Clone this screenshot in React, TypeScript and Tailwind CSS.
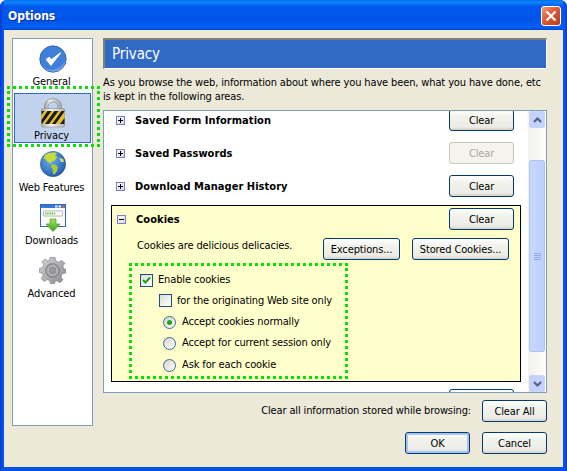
import React from "react";

const F = "font-['DejaVu_Sans_Condensed','DejaVu_Sans',sans-serif]";

function Btn({ w, label, disabled, def }: { w: string; label: string; disabled?: boolean; def?: boolean }) {
  return (
    <div
      className={`${w} h-[22px] shrink-0 rounded-[3px] border flex items-center justify-center text-[11px] leading-none whitespace-nowrap ${
        disabled
          ? "border-[#C9C7BA] bg-[#F4F3EE] text-[#ACA899]"
          : "border-[#003C74] bg-[linear-gradient(180deg,#FFFFFF_0%,#F3F3EE_30%,#ECEBE5_85%,#D6D0C5_100%)] text-black"
      } ${def ? "shadow-[inset_0_0_0_2px_#A9C4EE]" : ""}`}
    >
      {label}
    </div>
  );
}

function Tree({ minus }: { minus?: boolean }) {
  return (
    <div className="w-[9px] h-[9px] shrink-0 border border-[#7B7FC0] bg-[linear-gradient(135deg,#FFFFFF,#D8D8E4)] relative">
      <div className="absolute left-[1px] top-[3px] w-[5px] h-[1px] bg-black" />
      {!minus && <div className="absolute left-[3px] top-[1px] w-[1px] h-[5px] bg-black" />}
    </div>
  );
}

function Row({ title, disabled }: { title: string; disabled?: boolean }) {
  return (
    <div className="flex items-center h-[22px] pl-[12px] pr-[14px]">
      <Tree />
      <div className="ml-[10px] pt-[3px] font-bold text-[11px] tracking-[0.05px] flex-1 text-black">{title}</div>
      <Btn w="w-[65px]" label="Clear" disabled={disabled} />
    </div>
  );
}

function Check({ on }: { on?: boolean }) {
  return (
    <div className="w-[13px] h-[13px] shrink-0 border border-[#1C5180] bg-[linear-gradient(135deg,#DCDCD7,#FFFFFF)]">
      {on && (
        <svg viewBox="0 0 11 11" className="w-[11px] h-[11px]">
          <path d="M2 5 L4.5 7.5 L9 2.5" fill="none" stroke="#21A121" strokeWidth="2" />
        </svg>
      )}
    </div>
  );
}

function Radio({ on }: { on?: boolean }) {
  return (
    <div className="w-[13px] h-[13px] shrink-0 rounded-full border border-[#3B6A96] bg-[linear-gradient(135deg,#D4D4CE,#FFFFFF)] flex items-center justify-center">
      {on && <div className="w-[5px] h-[5px] rounded-full bg-[#21A121]" />}
    </div>
  );
}

const IconGeneral = () => (
  <svg viewBox="0 0 28 28" className="w-[28px] h-[28px]">
    <defs>
      <radialGradient id="g1" cx="0.45" cy="0.35" r="0.75">
        <stop offset="0" stopColor="#3E7FDB" />
        <stop offset="0.7" stopColor="#3F80DC" />
        <stop offset="0.88" stopColor="#9CC3F3" />
        <stop offset="1" stopColor="#3A6FBE" />
      </radialGradient>
    </defs>
    <circle cx="14" cy="14" r="13.2" fill="url(#g1)" stroke="#2E5A9C" strokeWidth="0.8" />
    <path d="M7.5 14.5 L12 20 L21.5 8 L12.3 15 L10 12.5 Z" fill="#fff" stroke="#fff" strokeWidth="1.2" strokeLinejoin="round" />
  </svg>
);

const IconLock = () => (
  <svg viewBox="0 0 24 30" className="w-[24px] h-[30px]">
    <defs>
      <linearGradient id="l1" x1="0" x2="1">
        <stop offset="0" stopColor="#9A9A9A" />
        <stop offset="0.3" stopColor="#F0F0F0" />
        <stop offset="1" stopColor="#A4A4A4" />
      </linearGradient>
      <linearGradient id="l2" x1="0" x2="1">
        <stop offset="0" stopColor="#A8A8A8" />
        <stop offset="0.4" stopColor="#F6F6F6" />
        <stop offset="1" stopColor="#B4B4B4" />
      </linearGradient>
    </defs>
    <path d="M3.5 12 V9 C3.5 3.5 7 0.7 12 0.7 C17 0.7 20.5 3.5 20.5 9 V12 H17 V9 C17 5.8 15 4 12 4 C9 4 7 5.8 7 9 V12 Z" fill="url(#l1)" stroke="#808080" strokeWidth="0.6" />
    <rect x="0.4" y="10.5" width="23.2" height="18.5" rx="1.5" fill="url(#l2)" stroke="#8A8A8A" strokeWidth="0.6" />
    <rect x="0.5" y="13" width="23" height="13" fill="#E2BE3A" />
    <path d="M0.5 13h3l-3 4zM6.5 13h4l-9.5 13h-0.5v-4zM13.5 13h4L8 26H4zM20.5 13h3v0.5L14.5 26h-3.5zM23.5 20v6h-4.5z" fill="#1C1C1C" />
  </svg>
);

const IconGlobe = () => (
  <svg viewBox="0 0 26 26" className="w-[26px] h-[26px]">
    <defs>
      <radialGradient id="w1" cx="0.4" cy="0.35" r="0.8">
        <stop offset="0" stopColor="#6FB0EE" />
        <stop offset="0.7" stopColor="#2D6CC0" />
        <stop offset="1" stopColor="#173C80" />
      </radialGradient>
    </defs>
    <circle cx="13" cy="13" r="12.6" fill="url(#w1)" stroke="#2A4C86" strokeWidth="0.6" />
    <path d="M5 4 C8 1.5 13 1 17 2 L15 5 L17.5 6 L14 10 L11 11 L10.5 13 L8 11 L5 8 L3.5 8 Z" fill="#C4DC3C" />
    <path d="M11.5 13.5 L15 13.5 L18 16 L17 20 L14.5 23.5 L13 23 L12.5 18 L11 16 Z" fill="#A8CE30" />
    <path d="M19 7 L23 8 L24 11 L21 11 Z" fill="#D2E254" />
  </svg>
);

const IconDownload = () => (
  <svg viewBox="0 0 26 28" className="w-[26px] h-[28px]">
    <defs>
      <linearGradient id="d1" x1="0" x2="0" y1="0" y2="1">
        <stop offset="0" stopColor="#A5E25A" />
        <stop offset="1" stopColor="#3FA11E" />
      </linearGradient>
    </defs>
    <rect x="0.5" y="0.5" width="25" height="22" fill="#FBFBF6" stroke="#2D66C4" />
    <rect x="1" y="1" width="24" height="3" fill="#3C78D8" />
    <rect x="15" y="1.5" width="2.5" height="2" fill="#E8EEF8" />
    <rect x="18.5" y="1.5" width="2.5" height="2" fill="#E8EEF8" />
    <rect x="22" y="1.5" width="2.5" height="2" fill="#E2623F" />
    <rect x="3.5" y="7" width="19" height="5" rx="1" fill="#FFF" stroke="#9A9A9A" strokeWidth="0.7" />
    <path d="M5 8.5h1.4v2H5zM7.2 8.5h1.4v2H7.2zM9.4 8.5h1.4v2H9.4zM11.6 8.5h1.4v2h-1.4zM13.8 8.5h1.4v2h-1.4z" fill="#5BBE3C" />
    <path d="M10 15 H16 V20 H20 L13 27.5 L6 20 H10 Z" fill="url(#d1)" stroke="#3B8A1E" strokeWidth="0.6" />
  </svg>
);

const IconGear = () => (
  <svg viewBox="0 0 27 27" className="w-[27px] h-[27px]">
    <defs>
      <linearGradient id="a1" x1="0" x2="1" y1="0" y2="1">
        <stop offset="0" stopColor="#D4D4D8" />
        <stop offset="1" stopColor="#8A8A90" />
      </linearGradient>
      <radialGradient id="a2">
        <stop offset="0" stopColor="#F4F4F4" />
        <stop offset="0.6" stopColor="#BCBCC0" />
        <stop offset="1" stopColor="#8A8A8E" />
      </radialGradient>
    </defs>
    <path
      d="M11 0.5 H16 L16.8 4 L19.8 5.2 L22.8 3.3 L25.7 6.2 L23.8 9.2 L25 12 L26.5 12 V16 L23.2 16.8 L22 19.8 L23.9 22.8 L21 25.7 L18 23.8 L16 24.6 L15.5 26.5 H11.5 L10.7 23.6 L8 22.6 L5 24.5 L2.2 21.6 L4.1 18.6 L3 16 L0.5 15.5 V11.5 L3.6 10.6 L4.8 7.8 L3 4.8 L5.8 2 L8.8 3.9 L10.5 3.2 Z"
      fill="url(#a1)"
      stroke="#78787C"
      strokeWidth="0.6"
    />
    <circle cx="13.5" cy="13.5" r="7" fill="url(#a2)" stroke="#77777B" strokeWidth="0.6" />
    <circle cx="13.5" cy="13.5" r="3.4" fill="#9A9A9E" stroke="#6A6A6E" strokeWidth="0.5" />
  </svg>
);

function Nav({ icon, label, sel }: { icon: React.ReactNode; label: string; sel?: boolean }) {
  return (
    <div className={`h-[50px] mx-[1px] flex flex-col items-center border ${sel ? "border-[#316AC5] bg-[#C1D2EE]" : "border-transparent"}`}>
      <div className="h-[33px] pt-[4px] flex items-start justify-center">{icon}</div>
      <div className={`text-[11px] leading-[14px] text-black whitespace-nowrap -ml-[2px] ${sel ? "mt-[2px]" : "mt-[1px]"}`}>{label}</div>
    </div>
  );
}

function Scrollbar() {
  return (
    <div className="w-[18px] shrink-0 flex flex-col bg-[linear-gradient(90deg,#F3F1EC,#FEFEFB)]">
      <div className="h-[17px] mx-[1px] rounded-[2px] border border-[#C9D6F5] bg-[#C3D3FD] flex items-center justify-center">
        <svg viewBox="0 0 9 6" className="w-[9px] h-[6px]"><path d="M1 5 L4.5 1.5 L8 5" fill="none" stroke="#4D6185" strokeWidth="2" /></svg>
      </div>
      <div className="h-[32px]" />
      <div className="h-[192px] mx-[1px] rounded-[2px] border border-[#AEC3F5] bg-[linear-gradient(90deg,#C9D8FC,#BCCFFB)] flex flex-col items-center justify-center gap-[1px]">
        <div className="w-[7px] h-[1px] bg-[#8FAAE8]" />
        <div className="w-[7px] h-[1px] bg-[#8FAAE8]" />
        <div className="w-[7px] h-[1px] bg-[#8FAAE8]" />
        <div className="w-[7px] h-[1px] bg-[#8FAAE8]" />
      </div>
      <div className="flex-1" />
      <div className="h-[17px] mx-[1px] rounded-[2px] border border-[#C9D6F5] bg-[#C3D3FD] flex items-center justify-center">
        <svg viewBox="0 0 9 6" className="w-[9px] h-[6px]"><path d="M1 1 L4.5 4.5 L8 1" fill="none" stroke="#4D6185" strokeWidth="2" /></svg>
      </div>
    </div>
  );
}

function Opt({ pl, ctl, label, h, gap }: { pl: string; ctl: React.ReactNode; label: string; h: string; gap: string }) {
  return (
    <div className={`flex items-center ${pl} ${h}`}>
      {ctl}
      <div className={`${gap} text-[11px] text-black whitespace-nowrap`}>{label}</div>
    </div>
  );
}

export default function App() {
  return (
    <div className={`w-[567px] h-[471px] relative overflow-hidden ${F} tracking-[-0.13px] bg-[#0053E4] rounded-t-[7px]`}>
      <div className="h-[30px] flex items-center justify-between pl-[8px] pr-[6px] pt-[2px] bg-[linear-gradient(180deg,#0A6AF0_0%,#0A85FB_8%,#0058EE_22%,#0055E8_70%,#0062F5_90%,#0046CF_100%)]">
        <div className="text-white font-bold text-[12px] leading-none tracking-normal [text-shadow:1px_1px_0_#0F2F9A]">Options</div>
        <div className="w-[20px] h-[20px] rounded-[3px] border border-white bg-[linear-gradient(135deg,#EE9A7C,#DD5A33_45%,#C23A15)] flex items-center justify-center">
          <svg viewBox="0 0 12 12" className="w-[12px] h-[12px]"><path d="M1.5 1.5 L10.5 10.5 M10.5 1.5 L1.5 10.5" stroke="#fff" strokeWidth="2.2" /></svg>
        </div>
      </div>
      <div className="absolute left-0 top-0 bottom-0 w-[4px] bg-[linear-gradient(90deg,#0831D9,#0055E8_50%,#0B55E3)]" />
      <div className="absolute right-0 top-0 bottom-0 w-[4px] bg-[linear-gradient(90deg,#0B55E3,#0055E8_50%,#0831D9)]" />
      <div className="mx-[4px] h-[437px] bg-[#ECE9D8] flex pt-[8px] pl-[8px] pr-[16px] pb-[14px] gap-[10px]">
        <div className="w-[81px] shrink-0 h-[388px] border border-[#7F9DB9] bg-white pt-[1px] flex flex-col gap-[3px]">
          <Nav icon={<IconGeneral />} label="General" />
          <Nav icon={<IconLock />} label="Privacy" sel />
          <Nav icon={<IconGlobe />} label="Web Features" />
          <Nav icon={<IconDownload />} label="Downloads" />
          <Nav icon={<IconGear />} label="Advanced" />
        </div>
        <div className="flex-1 min-w-0 flex flex-col">
          <div className="h-[31px] shrink-0 bg-[#316AC5] border-t-2 border-l-2 border-t-[#808078] border-l-[#808078] border-b border-r border-b-white border-r-white flex items-center pl-[7px] pt-[1px] text-white text-[15px] leading-none">
            Privacy
          </div>
          <div className="mt-[7px] text-[11px] leading-[14px] h-[34px] shrink-0 text-black whitespace-nowrap overflow-hidden">
            As you browse the web, information about where you have been, what you have done, etc
            <br />
            is kept in the following areas.
          </div>
          <div className="h-[283px] shrink-0 border border-[#7F9DB9] bg-white flex overflow-hidden">
            <div className="flex-1 min-w-0 overflow-hidden flex flex-col gap-[11px] -mt-[2px]">
              <Row title="Saved Form Information" />
              <Row title="Saved Passwords" disabled />
              <Row title="Download Manager History" />
              <div className="-mt-[3px] mx-[7px] h-[177px] shrink-0 border border-black bg-[#FFFFCC] flex flex-col">
                <div className="flex items-center h-[22px] mt-[2px] pl-[5px] pr-[6px]">
                  <Tree minus />
                  <div className="ml-[10px] pt-[3px] font-bold text-[11px] tracking-[0.05px] flex-1 text-black">Cookies</div>
                  <Btn w="w-[65px]" label="Clear" />
                </div>
                <div className="flex items-center h-[22px] mt-[8px] pl-[25px]">
                  <div className="text-[11px] w-[186px] pb-[5px] text-black">Cookies are delicious delicacies.</div>
                  <Btn w="w-[77px]" label="Exceptions..." />
                  <div className="w-[12px]" />
                  <Btn w="w-[97px]" label="Stored Cookies..." />
                </div>
                <div className="ml-[17px] mt-[3px] w-[219px] h-[116px] border-[3px] border-dotted border-[#0ADF0A] flex flex-col pt-[4px]">
                  <Opt pl="pl-[8px]" h="h-[21px]" gap="ml-[5px]" ctl={<Check on />} label="Enable cookies" />
                  <Opt pl="pl-[27px]" h="h-[21px]" gap="ml-[5px]" ctl={<Check />} label="for the originating Web site only" />
                  <Opt pl="pl-[31px]" h="h-[22px]" gap="ml-[6px]" ctl={<Radio on />} label="Accept cookies normally" />
                  <Opt pl="pl-[31px]" h="h-[22px]" gap="ml-[6px]" ctl={<Radio />} label="Accept for current session only" />
                  <Opt pl="pl-[31px]" h="h-[22px]" gap="ml-[6px]" ctl={<Radio />} label="Ask for each cookie" />
                </div>
              </div>
              <div className="-mt-[4px] flex justify-end pr-[14px]">
                <Btn w="w-[65px]" label="" />
              </div>
            </div>
            <Scrollbar />
          </div>
          <div className="flex items-center justify-end h-[22px] mt-[7px] text-[11px] text-black">
            <div className="mr-[11px]">Clear all information stored while browsing:</div>
            <Btn w="w-[65px]" label="Clear All" />
          </div>
          <div className="flex items-center justify-end gap-[12px] mt-[10px]">
            <Btn w="w-[65px]" label="OK" def />
            <Btn w="w-[65px]" label="Cancel" />
          </div>
        </div>
      </div>
      <div className="absolute left-[7px] top-[86px] w-[93px] h-[61px] border-[3px] border-dotted border-[#0ADF0A]" />
    </div>
  );
}
